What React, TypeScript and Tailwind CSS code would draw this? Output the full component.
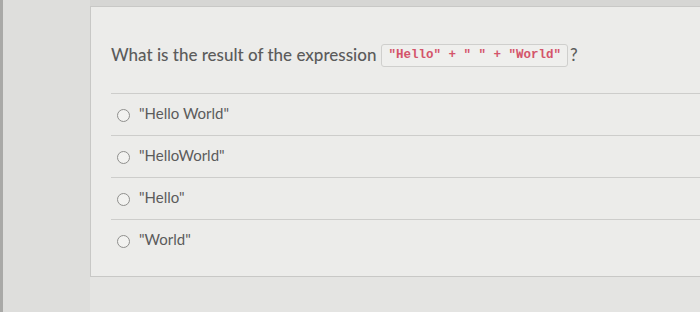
export default function App() {
  const options = ['"Hello World"', '"HelloWorld"', '"Hello"', '"World"'];
  return (
    <div className="w-[700px] h-[312px] overflow-hidden bg-[#e2e2e0] flex" style={{ fontFamily: 'Lato, "Open Sans", sans-serif' }}>
      <div className="w-[3px] bg-[#a9a9a7]" />
      <div className="w-[87px] bg-[#dededc]" />
      <div className="flex-1 flex flex-col">
        <div className="h-[6px] bg-[#d6d6d4]" />
        <div className="h-[271px] bg-[#ececea] border-t border-l border-b border-[#c8c8c6] pl-[20px] pt-[37px]">
          <div className="flex items-center text-[17px] text-[#5b5b5b] h-[22px] font-medium">
            <span>What is the result of the expression</span>
            <span className="ml-[5px] h-[23px] flex items-center px-[6px] bg-[#efefed] border border-[#cfcfcd] rounded-[3px] text-[12.5px] text-[#d4546a] font-semibold whitespace-pre" style={{ fontFamily: '"Liberation Mono", "DejaVu Sans Mono", monospace' }}>
              {'"Hello" + " " + "World"'}
            </span>
            <span className="ml-[2px]">?</span>
          </div>
          <div className="mt-[27px]">
            {options.map((o) => (
              <div key={o} className="h-[43px] border-t border-[#cdcdcb] flex items-center pl-[6px] -mt-[1px] first:mt-0">
                <span className="w-[13px] h-[13px] rounded-full border-[1.5px] border-[#8f8f8d] bg-[#f2f2f0] mr-[9px]" />
                <span className="text-[15px] text-[#5b5b5b] mb-[4px]">{o}</span>
              </div>
            ))}
          </div>
        </div>
        <div className="flex-1 bg-[#e4e4e2]" />
      </div>
    </div>
  );
}
